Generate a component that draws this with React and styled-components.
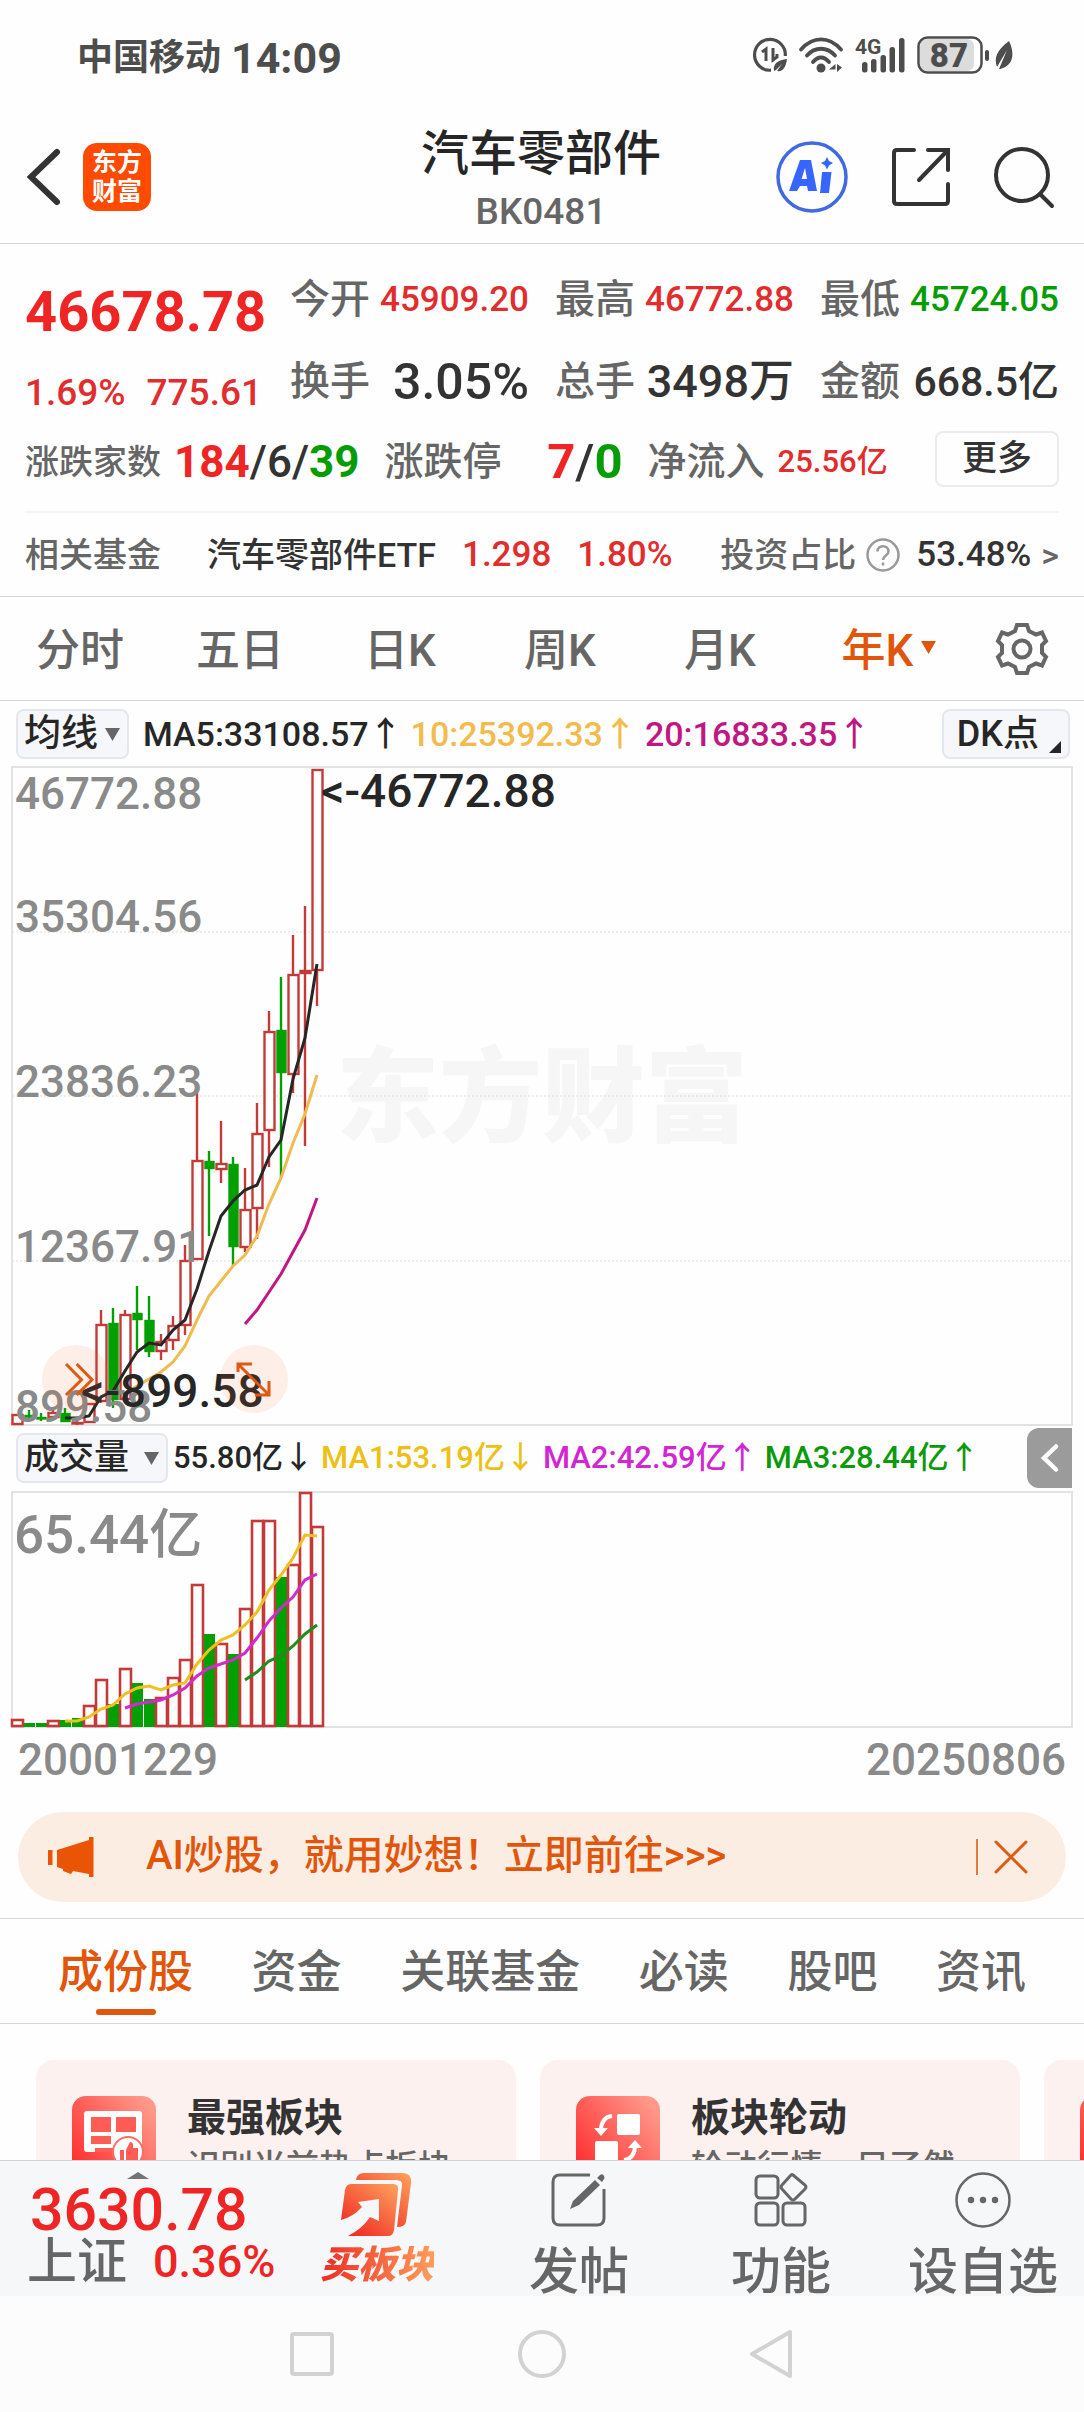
import React from "react";
import styled, { createGlobalStyle } from "styled-components";

const RED = "#ee2524";
const GREEN = "#069c06";
const ORANGE = "#e2560c";
const DARK = "#333333";
const GRAY = "#666666";

const GlobalStyle = createGlobalStyle`
  * {
    box-sizing: border-box;
  }

  body {
    margin: 0;
    background: #fefefe;
    font-family: Roboto, "Noto Sans CJK SC", sans-serif;
    font-weight: 500;
    color: ${DARK};
  }

  button,
  select {
    margin: 0;
    padding: 0;
    border: none;
    background: none;
    font: inherit;
    color: inherit;
    cursor: pointer;
  }

  a {
    color: inherit;
    text-decoration: none;
  }

  svg {
    display: block;
    flex: none;
    overflow: visible;
  }
`;

const Page = styled.div`
  display: flex;
  flex-direction: column;
  height: 100vh;
  overflow: hidden;
`;

const Main = styled.main`
  flex: 1;
  min-height: 0;
  overflow-x: hidden;
  overflow-y: auto;
  scrollbar-width: none;
`;

/* status bar */

const StatusBar = styled.div`
  display: flex;
  align-items: center;
  height: 110px;
  padding: 0 70px 0 77px;
  color: #4d4d4d;
`;

const Carrier = styled.span`
  padding-top: 6px;
  font-size: 36px;
  font-weight: 700;
  line-height: 48px;
`;

const Clock = styled.span`
  margin-left: 10px;
  padding-top: 6px;
  font-size: 43px;
  font-weight: 700;
  line-height: 48px;
`;

const StatusIcons = styled.div`
  display: flex;
  align-items: center;
  gap: 12px;
  margin-left: auto;
`;

/* header */

const Header = styled.header`
  display: grid;
  grid-template-columns: 1fr auto 1fr;
  align-items: center;
  height: 134px;
  padding: 0 28px 0 26px;
  border-bottom: 1px solid #d6d6d6;
`;

const HeaderLeft = styled.div`
  display: flex;
  align-items: center;
  gap: 23px;
`;

const HeaderRight = styled.div`
  display: flex;
  align-items: center;
  justify-content: flex-end;
  gap: 44px;
`;

const Logo = styled.a`
  display: flex;
  flex-direction: column;
  align-items: center;
  justify-content: center;
  width: 68px;
  height: 68px;
  border-radius: 14px;
  background: #ff4a00;
  color: #ffffff;
  font-size: 25px;
  font-weight: 700;
  line-height: 29px;
`;

const HeaderTitle = styled.div`
  padding-top: 13px;
  text-align: center;
`;

const Title = styled.h1`
  margin: 0;
  font-size: 48px;
  font-weight: 500;
  line-height: 58px;
  color: #262626;
`;

const Code = styled.div`
  font-size: 37px;
  line-height: 58px;
  color: ${GRAY};
`;

/* quote */

const Quote = styled.section`
  height: 353px;
  padding: 10px 25px 0;
  border-bottom: 1px solid #d6d6d6;
`;

const QuoteTop = styled.div`
  display: flex;
  gap: 28px;
`;

const PriceBlock = styled.div`
  width: 237px;
  padding-top: 18px;
`;

const Price = styled.div`
  font-size: 56px;
  font-weight: 700;
  line-height: 80px;
  color: ${RED};
`;

const Change = styled.div`
  display: flex;
  justify-content: space-between;
  height: 79px;
  font-size: 37px;
  line-height: 82px;
  color: #e12d2d;
`;

const StatGrid = styled.div`
  flex: 1;
  display: grid;
  grid-template-columns: repeat(3, 1fr);
  align-content: start;
  column-gap: 26px;
  padding-top: 5px;
`;

const Stat = styled.div`
  display: flex;
  align-items: center;
  justify-content: space-between;
  height: 82px;
`;

const Label = styled.span`
  font-size: ${(p) => p.$size || 40}px;
  line-height: 56px;
  white-space: nowrap;
  color: ${GRAY};
`;

const Value = styled.span`
  font-size: ${(p) => p.$size || 35}px;
  font-weight: ${(p) => (p.$bold ? 700 : 500)};
  line-height: 56px;
  white-space: nowrap;
  color: ${(p) => p.$color || DARK};
`;

const CountRow = styled.div`
  display: flex;
  align-items: center;
  gap: 25px;
  height: 56px;
`;

const CountGroup = styled.div`
  display: flex;
  align-items: center;
  justify-content: space-between;
  gap: 13px;
  min-width: ${(p) => p.$min || 0}px;
  padding-top: 5px;
`;

const MoreButton = styled.button`
  width: 124px;
  height: 56px;
  margin-left: auto;
  border: 2px solid #ebebeb;
  border-radius: 8px;
  font-size: 35px;
  line-height: 48px;
`;

const FundRow = styled.div`
  display: flex;
  align-items: center;
  height: 80px;
  margin-top: 24px;
  padding-top: 5px;
  border-top: 2px solid #f5f5f5;
`;

const FundLink = styled.a`
  display: flex;
  gap: 26px;
  margin-left: 46px;
`;

const FundShare = styled.a`
  display: flex;
  align-items: center;
  margin-left: auto;
  gap: 10px;
`;

const ShareValue = styled.span`
  padding-left: 6px;
  font-size: 35px;
  line-height: 56px;
`;

/* period tabs */

const PeriodTabs = styled.nav`
  display: grid;
  grid-template-columns: repeat(6, 1fr) 124px;
  height: 104px;
  border-bottom: 1px solid #d6d6d6;
`;

const PeriodTab = styled.button`
  display: flex;
  align-items: center;
  justify-content: center;
  gap: 8px;
  padding-left: ${(p) => (p.$active ? 18 : 0)}px;
  padding-bottom: 3px;
  font-size: 44px;
  color: ${(p) => (p.$active ? ORANGE : GRAY)};
`;

const SettingsButton = styled.button`
  display: flex;
  align-items: center;
  justify-content: center;
`;

/* chart */

const ChartSection = styled.section`
  padding: 0 12px;
`;

const IndicatorRow = styled.div`
  display: flex;
  align-items: center;
  height: 66px;
  padding-left: 4px;
  padding-right: ${(p) => p.$end || 0}px;
`;

const SelectBox = styled.label`
  display: flex;
  align-items: center;
  gap: ${(p) => p.$gap || 6}px;
  height: 50px;
  margin-right: ${(p) => p.$after || 6}px;
  padding: 0 7px 0 6px;
  border: 2px solid #e4e7eb;
  border-radius: 8px;
  background: #f6f7fa;
  color: #262626;

  select {
    appearance: none;
    outline: none;
    font-size: ${(p) => p.$size || 35}px;
    line-height: 46px;
    height: 46px;
  }
`;

const DKButton = styled.button`
  display: flex;
  align-items: flex-end;
  gap: 10px;
  height: 50px;
  margin-left: auto;
  padding: 0 7px 4px 13px;
  border: 2px solid #e4e7eb;
  border-radius: 8px;
  background: #f6f7fa;
  font-size: 36px;
  line-height: 38px;
  color: #262626;
`;

const Indicator = styled.span`
  margin-left: ${(p) => p.$space || 8}px;
  font-size: ${(p) => p.$size || 34}px;
  line-height: 50px;
  white-space: nowrap;
  color: ${(p) => p.$color};
`;

const ExpandButton = styled.button`
  display: flex;
  align-items: center;
  justify-content: center;
  width: 45px;
  height: 60px;
  margin-left: auto;
  border-radius: 12px 0 0 12px;
  background: #9b9b9b;
`;

const Canvas = styled.svg`
  width: 100%;
  height: ${(p) => p.$height}px;
  font-weight: 500;
`;

const Dates = styled.div`
  display: flex;
  justify-content: space-between;
  padding: 0 6px;
  font-size: 44px;
  line-height: 64px;
  color: #8a8a8a;
`;

/* promo */

const Promo = styled.div`
  display: flex;
  align-items: center;
  height: 90px;
  margin: 20px 18px 16px;
  padding: 0 38px 0 30px;
  border-radius: 45px;
  background: #fcede3;
  color: ${ORANGE};
`;

const PromoLink = styled.a`
  margin-left: 52px;
  padding-bottom: 2px;
  font-size: 40px;
  line-height: 56px;
`;

const PromoClose = styled.button`
  display: flex;
  align-items: center;
  height: 36px;
  margin-left: auto;
  padding-left: 16px;
  border-left: 2px solid #e07a42;
`;

/* content tabs */

const ContentTabs = styled.nav`
  display: flex;
  justify-content: space-between;
  height: 106px;
  padding: 0 58px;
  border-top: 1px solid #d6d6d6;
  border-bottom: 1px solid #d6d6d6;
`;

const ContentTab = styled.button`
  display: flex;
  flex-direction: column;
  align-items: center;
  padding-top: 22px;
  font-size: 45px;
  line-height: 64px;
  color: ${(p) => (p.$active ? ORANGE : GRAY)};

  &::after {
    content: "";
    width: 60px;
    height: 6px;
    margin-top: 4px;
    border-radius: 3px;
    background: ${(p) => (p.$active ? ORANGE : "transparent")};
  }
`;

const Cards = styled.div`
  display: flex;
  gap: 24px;
  padding: 36px;
  overflow-x: auto;
  scrollbar-width: none;
`;

const Card = styled.a`
  flex: none;
  display: flex;
  gap: 31px;
  width: 480px;
  height: 156px;
  padding: 36px;
  border-radius: 18px;
  background: #fdf1f0;
`;

const CardTitle = styled.div`
  margin-top: -4px;
  font-size: 39px;
  font-weight: 700;
  line-height: 52px;
`;

const CardText = styled.div`
  font-size: 33px;
  line-height: 46px;
  white-space: nowrap;
  color: ${GRAY};
`;

/* bottom bar */

const BottomBar = styled.footer`
  display: flex;
  height: 136px;
  border-top: 1px solid #d3d5da;
  background: #f6f7f9;
`;

const IndexBox = styled.a`
  display: grid;
  grid-template-columns: auto 1fr;
  grid-template-rows: 8px 62px 42px;
  align-content: start;
  align-items: center;
  column-gap: 26px;
  width: 276px;
  padding: 10px 0 0 27px;
  white-space: nowrap;

  svg {
    grid-column: 1 / -1;
    margin-left: 100px;
  }
`;

const IndexValue = styled.div`
  grid-column: 1 / -1;
  padding-left: 3px;
  font-size: 59px;
  line-height: 60px;
  color: ${RED};
`;

const IndexName = styled.div`
  font-size: 50px;
  line-height: 42px;
  color: ${GRAY};
`;

const IndexChange = styled.div`
  font-size: 45px;
  line-height: 42px;
  color: ${RED};
`;

const BottomItem = styled.button`
  flex: 1;
  display: flex;
  flex-direction: column;
  align-items: center;
  padding-top: 11px;
  font-size: 50px;
  line-height: 88px;
  color: ${GRAY};
`;

const BuyText = styled.span`
  font-size: 38px;
  font-style: italic;
  font-weight: 900;
  line-height: 54px;
  background: linear-gradient(90deg, #ee2b24, #ff9d5a);
  background-clip: text;
  -webkit-text-fill-color: transparent;
`;

const SystemNav = styled.nav`
  display: flex;
  align-items: center;
  justify-content: center;
  gap: 182px;
  height: 116px;
  background: #fcfcfc;

  button {
    display: flex;
  }
`;

// wicks and bodies in px from the top of the price pane: up?, high, top, bottom, low
const candles = [
  [1, 647, 647, 658, 658],
  [0, 643, 648, 650, 652],
  [0, 646, 650, 652, 654],
  [1, 642, 645, 651, 651],
  [0, 641, 646, 655, 655],
  [1, 654, 655, 657, 658],
  [1, 636, 636, 656, 656],
  [1, 543, 557, 635, 635],
  [0, 541, 556, 633, 641],
  [1, 543, 547, 633, 633],
  [0, 519, 546, 553, 583],
  [0, 529, 553, 585, 590],
  [1, 567, 574, 585, 593],
  [1, 549, 558, 574, 583],
  [1, 478, 493, 559, 568],
  [1, 326, 393, 493, 493],
  [0, 384, 394, 402, 469],
  [1, 354, 396, 403, 416],
  [0, 390, 397, 480, 499],
  [1, 401, 442, 481, 485],
  [1, 336, 366, 442, 472],
  [1, 244, 264, 364, 400],
  [0, 210, 263, 306, 411],
  [1, 168, 207, 308, 326],
  [1, 139, 203, 207, 379],
  [1, 2, 2, 204, 239],
];

const priceLines = [
  {
    color: "#262626",
    from: 4,
    ys: [651, 651, 649, 630, 624, 604, 585, 576, 578, 563, 553, 522, 484, 449, 434, 423, 418, 390, 373, 312, 271, 197],
  },
  {
    color: "#f0bb52",
    from: 9,
    ys: [627, 619, 612, 605, 595, 579, 553, 529, 514, 499, 488, 469, 437, 411, 376, 347, 308],
  },
  { color: "#c01780", from: 19, ys: [557, 543, 525, 507, 485, 463, 431] },
];

const volumes = [
  [1, 228], [0, 232], [0, 232], [1, 229], [0, 229], [0, 227], [1, 214], [1, 188], [0, 213],
  [1, 177], [0, 192], [0, 208], [1, 206], [1, 186], [1, 168], [1, 93], [0, 143], [1, 152],
  [0, 163], [1, 117], [1, 29], [1, 29], [0, 86], [1, 73], [1, 1], [1, 35],
];

const volumeLines = [
  {
    color: "#eec022",
    from: 4,
    ys: [230, 230, 226, 218, 214, 203, 197, 195, 199, 194, 192, 173, 159, 149, 144, 134, 121, 99, 84, 67, 44, 45],
  },
  {
    color: "#cf2ccb",
    from: 9,
    ys: [217, 213, 211, 209, 204, 197, 185, 177, 173, 169, 162, 147, 130, 117, 106, 89, 83],
  },
  { color: "#1f8c1f", from: 19, ys: [189, 181, 170, 165, 155, 143, 134] },
];

const STEP = 12;
const UP = "#c23b39";
const DOWN = "#02a002";

const Lines = ({ lines }) =>
  lines.map((line) => (
    <polyline
      key={line.color}
      points={line.ys.map((y, i) => `${5 + (line.from + i) * STEP},${y}`).join(" ")}
      fill="none"
      stroke={line.color}
      strokeWidth="3"
    />
  ));

function PriceChart() {
  const labels = [
    ["46772.88", 42],
    ["35304.56", 165],
    ["23836.23", 330],
    ["12367.91", 495],
    ["899.58", 655],
  ];
  return (
    <Canvas $height={658} role="img" aria-label="年K线">
      <text x="50%" y="367" textAnchor="middle" fontSize="103" fontWeight="900" fill="#f6f6f6">
        东方财富
      </text>
      {[165, 329, 494].map((y) => (
        <line key={y} x1="0" x2="100%" y1={y} y2={y} stroke="#dcdcdc" strokeDasharray="2 2" />
      ))}
      <rect x="0" y="0" width="100%" height="658" fill="none" stroke="#e3e3e3" strokeWidth="2" />
      {candles.map(([up, high, top, bottom, low], i) => {
        const x = 5 + i * STEP;
        return (
          <g key={i} stroke={up ? UP : DOWN} strokeWidth="2.4">
            <line x1={x} x2={x} y1={high} y2={low} />
            <rect
              x={x - (up ? 4.5 : 3.5)}
              y={top + 1}
              width={up ? 10 : 8}
              height={Math.max(bottom - top - 2, 0.5)}
              fill={up ? "#fefefe" : DOWN}
            />
          </g>
        );
      })}
      <Lines lines={priceLines} />
      {labels.map(([text, y]) => (
        <text key={text} x="3" y={y} fontSize="44" fill="#8a8a8a">
          {text}
        </text>
      ))}
      <text x="309" y="40" fontSize="46" fill="#262626">
        &lt;-46772.88
      </text>
      <text x="69" y="640" fontSize="46" fill="#262626">
        &lt;-899.58
      </text>
      <circle cx="64" cy="612" r="34" fill="rgba(245, 100, 30, 0.1)" />
      <circle cx="242" cy="612" r="34" fill="rgba(245, 100, 30, 0.1)" />
      <g fill="none" stroke="#dd5a14" strokeWidth="3">
        <path d="M54 597l15.5 15.7L54 628M64.7 597L80 612.7 64.7 628" />
        <path d="M226 605v-8h14M226 597l31 31M243 628h14v-14" />
      </g>
    </Canvas>
  );
}

function VolumeChart() {
  return (
    <Canvas $height={237} role="img" aria-label="成交量">
      <rect x="0" y="1" width="100%" height="235" fill="none" stroke="#e3e3e3" strokeWidth="2" />
      {volumes.map(([up, top], i) =>
        up ? (
          <rect
            key={i}
            x={i * STEP}
            y={top + 1}
            width="11"
            height={234 - top}
            fill="#fefefe"
            stroke={UP}
            strokeWidth="2.6"
          />
        ) : (
          <rect key={i} x={i * STEP} y={top} width="11" height={236 - top} fill={DOWN} />
        )
      )}
      <Lines lines={volumeLines} />
      <text x="2" y="62" fontSize="53" fill="#8a8a8a">
        65.44亿
      </text>
    </Canvas>
  );
}

const Triangle = ({ color = "#666666" }) => (
  <svg width="15" height="13" viewBox="0 0 15 13">
    <path d="M0 0h15L7.5 13z" fill={color} />
  </svg>
);

const periods = ["分时", "五日", "日K", "周K", "月K", "年K"];
const contentTabs = ["成份股", "资金", "关联基金", "必读", "股吧", "资讯"];

const stats = [
  { label: "今开", value: "45909.20", color: "#e12d2d", size: 35 },
  { label: "最高", value: "46772.88", color: "#e12d2d", size: 35 },
  { label: "最低", value: "45724.05", color: GREEN, size: 35 },
  { label: "换手", value: "3.05%", size: 50 },
  { label: "总手", value: "3498万", size: 45 },
  { label: "金额", value: "668.5亿", size: 41 },
];

const CardIcon = ({ id, children }) => (
  <svg width="84" height="84" viewBox="0 0 84 84">
    <defs>
      <linearGradient id={id} x1="0" y1="0.8" x2="0.9" y2="0.1">
        <stop offset="0" stopColor="#ff2e30" />
        <stop offset="1" stopColor="#ff9889" />
      </linearGradient>
    </defs>
    <rect width="84" height="84" rx="14" fill={`url(#${id})`} />
    {children}
  </svg>
);

function App() {
  return (
    <Page>
      <GlobalStyle />
      <StatusBar>
        <Carrier>中国移动</Carrier>
        <Clock>14:09</Clock>
        <StatusIcons>
          <svg width="34" height="36" viewBox="0 0 34 36" fill="none" stroke="#4d4d4d">
            <path d="M18 33.2A15.4 15.4 0 1 1 32.3 19" strokeWidth="3.2" />
            <path d="M9 15l4-3V24M20 11v12l4-3v-3" strokeWidth="3" />
            <path d="M21 34c-1-8 4-11 13-12-1 8-4 13-10 12l5-7-6 6z" fill="#4d4d4d" stroke="none" />
          </svg>
          <svg width="44" height="36" viewBox="0 0 44 36" fill="none" stroke="#4d4d4d" strokeLinecap="round">
            <path d="M2 12.5C14-1 30-1 42 12.5M8 18.5c8-9 20-9 28 0M14 25c5-6 11-6 16 0" strokeWidth="3.8" />
            <circle cx="22" cy="31" r="4.5" fill="#4d4d4d" stroke="none" />
            <path d="M30 32.5h6.5V27l-6.5 5.5zM38 35v-8l5 3.5z" fill="#4d4d4d" stroke="none" />
          </svg>
          <svg width="50" height="36" viewBox="0 0 50 36" fill="#4d4d4d">
            <text x="0" y="17" fontSize="21" fontWeight="700">
              4G
            </text>
            <rect x="7" y="25" width="5.5" height="10.5" rx="2.5" />
            <rect x="16" y="22" width="5.5" height="13.5" rx="2.5" />
            <rect x="25.5" y="18" width="5.5" height="17.5" rx="2.5" />
            <rect x="34.5" y="10" width="5.5" height="25.5" rx="2.5" />
            <rect x="44" y="1" width="5.5" height="34.5" rx="2.5" />
          </svg>
          <svg width="97" height="38" viewBox="0 0 97 38">
            <rect x="3" y="3" width="54" height="32" rx="7" fill="#dcdcdc" />
            <rect x="1.5" y="1.5" width="63" height="35" rx="9" fill="none" stroke="#4d4d4d" strokeWidth="2.5" />
            <text x="32" y="30.5" textAnchor="middle" fontSize="33" fontWeight="900" fill="#4d4d4d">
              87
            </text>
            <rect x="68" y="14" width="4" height="11" rx="2" fill="#4d4d4d" />
            <path d="M80 31c-3-9-1-16 12-26 4 8 7 22-6 27-2 1-4 1-4 1l8-19z" fill="#4d4d4d" />
          </svg>
        </StatusIcons>
      </StatusBar>

      <Header>
        <HeaderLeft>
          <button aria-label="返回">
            <svg width="34" height="56" viewBox="0 0 34 56" fill="none" stroke="#333333" strokeWidth="6">
              <path d="M31 3L5 28l26 25" strokeLinecap="round" />
            </svg>
          </button>
          <Logo href="#home">
            <span>东方</span>
            <span>财富</span>
          </Logo>
        </HeaderLeft>
        <HeaderTitle>
          <Title>汽车零部件</Title>
          <Code>BK0481</Code>
        </HeaderTitle>
        <HeaderRight>
          <button aria-label="AI助手">
            <svg width="72" height="72" viewBox="0 0 72 72">
              <circle cx="36" cy="36" r="34" fill="none" stroke="#4169e1" strokeWidth="3.5" />
              <path
                fillRule="evenodd"
                fill="#3766ff"
                d="M24 19h11l6 31h-9l-1-5h-7l-3 5h-8zM29 27l-3.5 11H31zM46 31h9.5l-2.5 21h-9zM51 16l2 4 4 2-4 2.5-2 4-2-4-4-2.5 4-2z"
              />
            </svg>
          </button>
          <button aria-label="分享">
            <svg width="58" height="60" viewBox="0 0 58 60" fill="none" stroke="#333333" strokeWidth="4" strokeLinecap="round">
              <path d="M22 3H5q-3 0-3 3v48q0 3 3 3h48q3 0 3-3V37M36 3h20v20M56 3L27 33" />
            </svg>
          </button>
          <button aria-label="搜索">
            <svg width="62" height="62" viewBox="0 0 62 62" fill="none" stroke="#333333" strokeWidth="4" strokeLinecap="round">
              <circle cx="28" cy="29" r="26" />
              <path d="M46 48l12 12" />
            </svg>
          </button>
        </HeaderRight>
      </Header>

      <Main>
        <Quote>
          <QuoteTop>
            <PriceBlock>
              <Price>46678.78</Price>
              <Change>
                <span>1.69%</span>
                <span>775.61</span>
              </Change>
            </PriceBlock>
            <StatGrid>
              {stats.map((s) => (
                <Stat key={s.label}>
                  <Label>{s.label}</Label>
                  <Value $size={s.size} $color={s.color}>
                    {s.value}
                  </Value>
                </Stat>
              ))}
            </StatGrid>
          </QuoteTop>
          <CountRow>
            <CountGroup>
              <Label $size={34}>涨跌家数</Label>
              <Value $size={44}>
                <Value as="b" $bold $size={44} $color={RED}>184</Value>/6/
                <Value as="b" $bold $size={44} $color={GREEN}>39</Value>
              </Value>
            </CountGroup>
            <CountGroup $min={238}>
              <Label $size={39}>涨跌停</Label>
              <Value $size={49}>
                <Value as="b" $bold $size={49} $color={RED}>7</Value>/
                <Value as="b" $bold $size={49} $color={GREEN}>0</Value>
              </Value>
            </CountGroup>
            <CountGroup>
              <Label $size={39}>净流入</Label>
              <Value $size={31} $color="#e12d2d">25.56亿</Value>
            </CountGroup>
            <MoreButton>更多</MoreButton>
          </CountRow>
          <FundRow>
            <Label $size={34}>相关基金</Label>
            <FundLink href="#etf">
              <Value $size={34}>汽车零部件ETF</Value>
              <Value $size={35} $color="#e12d2d">1.298</Value>
              <Value $size={35} $color="#e12d2d">1.80%</Value>
            </FundLink>
            <FundShare href="#share">
              <Label $size={34}>投资占比</Label>
              <svg width="34" height="34" viewBox="0 0 34 34" fill="none" stroke="#999999" strokeWidth="2.5">
                <circle cx="17" cy="17" r="15.5" />
                <path d="M11.5 13.5c0-7 11-7 11 0 0 4-5.5 4-5.5 8.5M17 24.5v3" />
              </svg>
              <ShareValue>53.48%</ShareValue>
              <Label $size={34}>&gt;</Label>
            </FundShare>
          </FundRow>
        </Quote>

        <PeriodTabs>
          {periods.map((p) => (
            <PeriodTab key={p} $active={p === "年K"}>
              {p}
              {p === "年K" && <Triangle color={ORANGE} />}
            </PeriodTab>
          ))}
          <SettingsButton aria-label="设置">
            <svg width="54" height="54" viewBox="-27 -27 54 54" fill="none" stroke="#666666" strokeWidth="4">
              <path d="M-5-24H5L7-18 14-14.5 20-16.5 24-8 20-4V4L24 8 20 16.5 14 14.5 7 18 5 24H-5L-7 18-14 14.5-20 16.5-24 8-20 4V-4L-24-8-20-16.5-14-14.5-7-18z" />
              <circle r="8.5" />
            </svg>
          </SettingsButton>
        </PeriodTabs>

        <ChartSection>
          <IndicatorRow $end={2}>
            <SelectBox $size={37} $gap={7}>
              <select aria-label="主图指标">
                <option>均线</option>
              </select>
              <Triangle />
            </SelectBox>
            <Indicator $color="#262626">MA5:33108.57↑</Indicator>
            <Indicator $color="#f3bb4b">10:25392.33↑</Indicator>
            <Indicator $color="#c01780">20:16833.35↑</Indicator>
            <DKButton>
              DK点
              <svg width="12" height="12" viewBox="0 0 12 12">
                <path d="M12 0v12H0z" fill="#262626" />
              </svg>
            </DKButton>
          </IndicatorRow>
          <PriceChart />
          <IndicatorRow>
            <SelectBox $gap={14} $after={1}>
              <select aria-label="副图指标">
                <option>成交量</option>
              </select>
              <Triangle />
            </SelectBox>
            <Indicator $size={31} $space={4} $color="#262626">55.80亿↓</Indicator>
            <Indicator $size={31} $space={7} $color="#eec015">MA1:53.19亿↓</Indicator>
            <Indicator $size={31} $space={7} $color="#d326d3">MA2:42.59亿↑</Indicator>
            <Indicator $size={31} $space={7} $color="#0c990c">MA3:28.44亿↑</Indicator>
            <ExpandButton aria-label="展开">
              <svg width="18" height="28" viewBox="0 0 18 28" fill="none" stroke="#ffffff" strokeWidth="4.5" strokeLinecap="round">
                <path d="M15 2.5L3 14l12 11.5" />
              </svg>
            </ExpandButton>
          </IndicatorRow>
          <VolumeChart />
          <Dates>
            <span>20001229</span>
            <span>20250806</span>
          </Dates>
        </ChartSection>

        <Promo>
          <svg width="46" height="40" viewBox="0 0 46 40" fill="#e95504">
            <path d="M0 13h4.5v15H0zM9 13l32-10V0h4.5v40H41v-3l-16-3-2 3-8-3v-2l-6-2z" />
          </svg>
          <PromoLink href="#ai">AI炒股，就用妙想！立即前往&gt;&gt;&gt;</PromoLink>
          <PromoClose aria-label="关闭">
            <svg width="34" height="34" viewBox="0 0 34 34" stroke="#dd5a14" strokeWidth="3" strokeLinecap="round">
              <path d="M2 2l30 30M32 2L2 32" />
            </svg>
          </PromoClose>
        </Promo>

        <ContentTabs>
          {contentTabs.map((t, i) => (
            <ContentTab key={t} $active={i === 0}>
              {t}
            </ContentTab>
          ))}
        </ContentTabs>

        <Cards>
          <Card href="#best">
            <CardIcon id="best">
              <path d="M15 15h52q3 0 3 3v38H15q-3 0-3-3V18q0-3 3-3z" fill="#ffffff" />
              <path d="M19 21h20v15H19zM44 21h20v15H44zM19 40h20v8H19zM23 56h24v-4H23z" fill="#ff5c55" />
              <circle cx="56" cy="56" r="15" fill="#ffffff" stroke="#ff6c63" strokeWidth="2" />
              <path d="M48 54h4v12h-4zM54 54l4-8q4 0 3 6h5v12H54z" fill="#ff5c55" />
            </CardIcon>
            <div>
              <CardTitle>最强板块</CardTitle>
              <CardText>识别当前热点板块</CardText>
            </div>
          </Card>
          <Card href="#rotate">
            <CardIcon id="rotate">
              <rect x="41" y="18" width="23" height="21" rx="2" fill="#ffffff" />
              <rect x="19" y="45" width="23" height="21" rx="2" fill="#ffffff" />
              <path d="M36 20q-10 1-11 13M48 64q10-1 11-13" fill="none" stroke="#ffffff" strokeWidth="4" />
              <path d="M18 32h14l-7 8zM52 52h14l-7-8z" fill="#ffffff" />
            </CardIcon>
            <div>
              <CardTitle>板块轮动</CardTitle>
              <CardText>轮动行情一目了然</CardText>
            </div>
          </Card>
          <Card href="#more">
            <CardIcon id="more" />
          </Card>
        </Cards>
      </Main>

      <BottomBar>
        <IndexBox href="#index">
          <svg width="22" height="7" viewBox="0 0 22 7">
            <path d="M11 0l11 7H0z" fill="#737378" />
          </svg>
          <IndexValue>3630.78</IndexValue>
          <IndexName>上证</IndexName>
          <IndexChange>0.36%</IndexChange>
        </IndexBox>
        <BottomItem>
          <svg width="72" height="66" viewBox="0 0 72 66">
            <defs>
              <linearGradient id="buy" x1="0.1" y1="0.9" x2="0.9" y2="0">
                <stop offset="0" stopColor="#ee2b24" />
                <stop offset="1" stopColor="#ff9d5a" />
              </linearGradient>
            </defs>
            <g fill="url(#buy)">
              <path d="M10 12h42q6 0 5 6l-4 40q-1 6-6 6H7q14-7 22-19l9 4V27l-21 3 4 5Q12 45 0 48l4-30q1-6 6-6z" />
              <path d="M15 8q1-7 8-7h38q10 0 9 10l-5 39q-1 5-9 5l5-41q1-6-6-6z" />
            </g>
          </svg>
          <BuyText>买板块</BuyText>
        </BottomItem>
        <BottomItem>
          <svg width="56" height="56" viewBox="0 0 56 56" fill="none" stroke="#666666" strokeWidth="3">
            <path d="M39 3H9q-7 0-7 7v36q0 7 7 7h37q7 0 7-7V17" />
            <path d="M19 37l3-8L44 8l5 5-21 20zM46 6l3-3q3-2 4 1t0 3l-2 3z" fill="#666666" stroke="none" />
          </svg>
          发帖
        </BottomItem>
        <BottomItem>
          <svg width="56" height="56" viewBox="0 0 56 56" fill="none" stroke="#666666" strokeWidth="3">
            <rect x="3" y="4" width="22" height="22" rx="4" />
            <rect x="3" y="31" width="22" height="22" rx="4" />
            <rect x="30" y="31" width="22" height="22" rx="4" />
            <path d="M40 3l12 10q2 2 0 4L42 27q-2 2-4 0L29 17q-2-2 0-4l9-10q1-1 2 0z" />
          </svg>
          功能
        </BottomItem>
        <BottomItem>
          <svg width="58" height="56" viewBox="0 0 58 56" fill="none" stroke="#666666" strokeWidth="2.5">
            <circle cx="29" cy="28" r="26.5" />
            <g fill="#666666" stroke="none">
              <circle cx="17" cy="28" r="3.2" />
              <circle cx="29" cy="28" r="3.2" />
              <circle cx="41" cy="28" r="3.2" />
            </g>
          </svg>
          设自选
        </BottomItem>
      </BottomBar>

      <SystemNav>
        <button aria-label="最近任务">
          <svg width="48" height="48" viewBox="0 0 48 48" fill="none" stroke="#d2d2d2" strokeWidth="4">
            <rect x="4" y="4" width="40" height="40" rx="2" />
          </svg>
        </button>
        <button aria-label="主屏幕">
          <svg width="48" height="48" viewBox="0 0 48 48" fill="none" stroke="#d2d2d2" strokeWidth="4">
            <circle cx="24" cy="24" r="22" />
          </svg>
        </button>
        <button aria-label="后退">
          <svg width="48" height="48" viewBox="0 0 48 48" fill="none" stroke="#d2d2d2" strokeWidth="4" strokeLinejoin="round">
            <path d="M42 2v44L4 24z" />
          </svg>
        </button>
      </SystemNav>
    </Page>
  );
}

export default App;
